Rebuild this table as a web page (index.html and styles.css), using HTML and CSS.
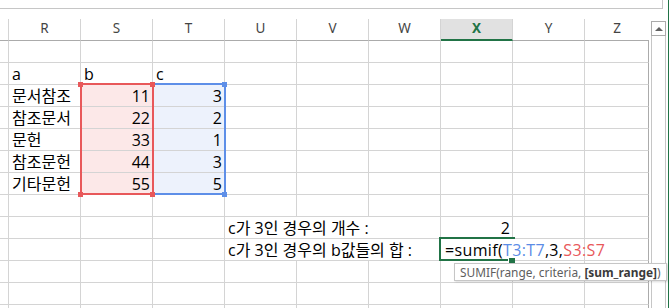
FILE: index.html
```html
<!DOCTYPE html>
<html>
<head>
    <meta charset="UTF-8" name="viewport" content="width=device-width, initial-scale=1.0"/>
    <title>sumif</title>
    <link rel="stylesheet" href="styles.css">
</head>
<body>
<div class="app">
    <div class="formula-bar"></div>
    <div class="workspace">
        <div class="sheet">
            <!-- column headers -->
            <div class="hd stub"></div><div class="hd">R</div><div class="hd">S</div><div class="hd">T</div><div class="hd">U</div><div class="hd">V</div><div class="hd">W</div><div class="hd on">X</div><div class="hd">Y</div><div class="hd last">Z</div>

            <div class="c stub"></div><div class="c"></div><div class="c"></div><div class="c"></div><div class="c"></div><div class="c"></div><div class="c"></div><div class="c"></div><div class="c"></div><div class="c last"></div>
            <div class="c stub"></div><div class="c">a</div><div class="c">b</div><div class="c">c</div><div class="c"></div><div class="c"></div><div class="c"></div><div class="c"></div><div class="c"></div><div class="c last"></div>
            <div class="c stub"></div><div class="c">문서참조</div><div class="c num red">11</div><div class="c num blue">3</div><div class="c"></div><div class="c"></div><div class="c"></div><div class="c"></div><div class="c"></div><div class="c last"></div>
            <div class="c stub"></div><div class="c">참조문서</div><div class="c num red">22</div><div class="c num blue">2</div><div class="c"></div><div class="c"></div><div class="c"></div><div class="c"></div><div class="c"></div><div class="c last"></div>
            <div class="c stub"></div><div class="c">문헌</div><div class="c num red">33</div><div class="c num blue">1</div><div class="c"></div><div class="c"></div><div class="c"></div><div class="c"></div><div class="c"></div><div class="c last"></div>
            <div class="c stub"></div><div class="c">참조문헌</div><div class="c num red">44</div><div class="c num blue">3</div><div class="c"></div><div class="c"></div><div class="c"></div><div class="c"></div><div class="c"></div><div class="c last"></div>
            <div class="c stub"></div><div class="c">기타문헌</div><div class="c num red">55</div><div class="c num blue">5</div><div class="c"></div><div class="c"></div><div class="c"></div><div class="c"></div><div class="c"></div><div class="c last"></div>
            <div class="c stub"></div><div class="c"></div><div class="c"></div><div class="c"></div><div class="c"></div><div class="c"></div><div class="c"></div><div class="c"></div><div class="c"></div><div class="c last"></div>
            <div class="c stub"></div><div class="c"></div><div class="c"></div><div class="c"></div><div class="c span3">c가 3인 경우의 개수 :</div><div class="c num">2</div><div class="c"></div><div class="c last"></div>
            <div class="c stub"></div><div class="c"></div><div class="c"></div><div class="c"></div><div class="c span3">c가 3인 경우의 b값들의 합 :</div><div class="c span2 formula">=sumif(<span class="ref-blue">T3:T7</span>,3,<span class="ref-red">S3:S7</span></div><div class="c last"></div>
            <div class="c stub"></div><div class="c"></div><div class="c"></div><div class="c"></div><div class="c"></div><div class="c"></div><div class="c"></div><div class="c"></div><div class="c"></div><div class="c last"></div>
            <div class="c stub"></div><div class="c"></div><div class="c"></div><div class="c"></div><div class="c"></div><div class="c"></div><div class="c"></div><div class="c"></div><div class="c"></div><div class="c last"></div>
            <div class="c stub"></div><div class="c"></div><div class="c"></div><div class="c"></div><div class="c"></div><div class="c"></div><div class="c"></div><div class="c"></div><div class="c"></div><div class="c last"></div>
            <div class="c stub"></div><div class="c"></div><div class="c"></div><div class="c"></div><div class="c"></div><div class="c"></div><div class="c"></div><div class="c"></div><div class="c"></div><div class="c last"></div>

            <!-- range outlines for the formula being edited -->
            <div class="range range-blue"></div>
            <div class="range range-red"></div>
            <div class="knob kb" style="left:222px;top:63px"></div>
            <div class="knob kb" style="left:222px;top:173px"></div>
            <div class="knob kr" style="left:78px;top:63px"></div>
            <div class="knob kr" style="left:150px;top:63px"></div>
            <div class="knob kr" style="left:78px;top:173px"></div>
            <div class="knob kr" style="left:150px;top:173px"></div>

            <div class="active"></div>
            <div class="fill-handle"></div>
        </div>
        <div class="vscroll">
            <div class="arrow-up"></div>
            <div class="track"></div>
        </div>
        <div class="tip">SUMIF(range, criteria, <b>[sum_range]</b>)</div>
    </div>
</div>
</body>
</html>
```

FILE: styles.css
```css
html, body {
    margin: 0;
    height: 100%;
    overflow: hidden;
    background: #fff;
}
.app {
    width: 669px;
    height: 308px;
    box-sizing: border-box;
    border-right: 1px solid #217346;
}
.formula-bar {
    width: 663px;
    height: 9px;
    box-sizing: border-box;
    border-right: 1px solid #c6c6c6;
    border-bottom: 1px solid #c6c6c6;
    margin-bottom: 10px;
}
.workspace {
    display: flex;
    gap: 2px;
    position: relative;
}
.sheet {
    position: relative;
    display: grid;
    grid-template-columns: 9px repeat(8, 72px) 64px;
    grid-auto-rows: 22px;
    height: 289px;
    overflow: hidden;
    font-family: "Open Sans", "Noto Sans CJK KR", sans-serif;
    font-size: 16px;
    color: #000;
}
.hd {
    box-sizing: border-box;
    border-right: 1px solid #d4d4d4;
    border-bottom: 1px solid #ababab;
    font-family: "Noto Sans", "Open Sans", sans-serif;
    font-size: 13.5px;
    color: #444;
    text-align: center;
    line-height: 18px;
}
.hd.on {
    background: #e1e1e1;
    color: #217346;
    font-weight: bold;
    border-bottom: 2px solid #217346;
}
.hd.last {
    border-right: none;
}
.c {
    box-sizing: border-box;
    border-right: 1px solid #d4d4d4;
    border-bottom: 1px solid #d4d4d4;
    padding: 0 3px;
    line-height: 22px;
    white-space: nowrap;
}
.c.last {
    border-right-color: #ababab;
}
.num {
    text-align: right;
    padding-right: 2px;
}
.red { background: #fce8e8; }
.blue { background: #edf2fc; }
.span3 { grid-column: span 3; }
.span2 { grid-column: span 2; }
.formula {
    padding-left: 4px;
    letter-spacing: 0.35px;
}
.ref-blue { color: #5b8ce6; }
.ref-red { color: #e8585a; }

.range {
    position: absolute;
    top: 64px;
    width: 74px;
    height: 112px;
    box-sizing: border-box;
    border: 2px solid;
}
.range-red {
    left: 80px;
    border-color: #e8585a;
}
.range-blue {
    left: 152px;
    border-color: #5e8fe8;
}
.knob {
    position: absolute;
    width: 5px;
    height: 5px;
}
.kr { background: #e8585a; }
.kb { background: #5e8fe8; }

.active {
    position: absolute;
    left: 439px;
    top: 218px;
    width: 76px;
    height: 24px;
    box-sizing: border-box;
    border: 2px solid #217346;
    border-right: none;
}
.fill-handle {
    position: absolute;
    left: 508px;
    top: 239px;
    width: 6px;
    height: 5px;
    background: #217346;
    border-left: 1px solid #fff;
}

.vscroll {
    margin-top: 2px;
    width: 15px;
    display: flex;
    flex-direction: column;
}
.arrow-up {
    height: 15px;
    box-sizing: border-box;
    border: 1px solid #ababab;
    position: relative;
}
.arrow-up::after {
    content: "";
    position: absolute;
    left: 3px;
    top: 5px;
    border-left: 4px solid transparent;
    border-right: 4px solid transparent;
    border-bottom: 4px solid #606060;
}
.track {
    flex: 1;
    border-left: 1px solid #c6c6c6;
    border-right: 1px solid #c6c6c6;
}

.tip {
    position: absolute;
    left: 454px;
    top: 244px;
    height: 18px;
    box-sizing: border-box;
    padding: 0 5px;
    border: 1px solid #c6c6c6;
    background: #fff;
    box-shadow: 1px 1px 2px rgba(0, 0, 0, 0.15);
    font-family: "Noto Sans", "Open Sans", sans-serif;
    font-size: 11.9px;
    line-height: 16px;
    color: #5e5e5e;
    white-space: nowrap;
}
.tip b {
    color: #3a3a3a;
}
```
